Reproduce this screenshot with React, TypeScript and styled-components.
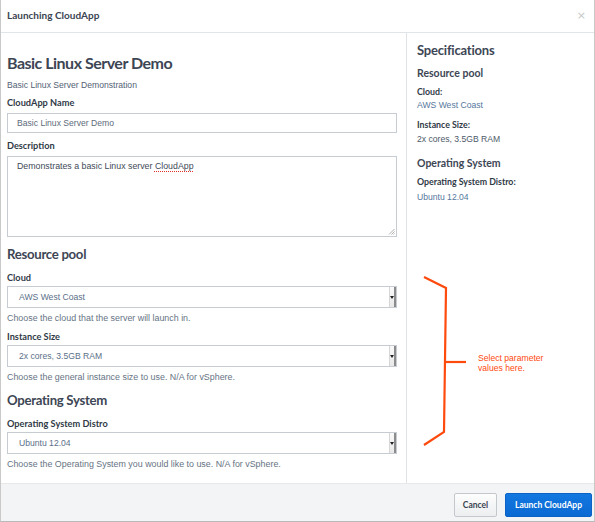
import React from "react";
import styled, { createGlobalStyle } from "styled-components";

const Global = createGlobalStyle`
  html, body { margin: 0; padding: 0; background: #fff; }
  body { font-family: "Liberation Sans", Arial, sans-serif; color: #3b4450; }
  * { box-sizing: border-box; }
`;

const Modal = styled.div`
  position: relative;
  width: 595px;
  height: 522px;
  display: flex;
  flex-direction: column;
  border-left: 1px solid #c9c9c9;
  border-right: 1px solid #c9c9c9;
  border-bottom: 1px solid #b9b9b9;
  background: #fff;
`;

const Header = styled.div`
  height: 33px;
  flex: none;
  display: flex;
  align-items: center;
  justify-content: space-between;
  padding: 0 8px 2px 6px;
  border-bottom: 1px solid #e2e5e8;
`;

const Title = styled.div`
  font-family: Lato, "Liberation Sans", sans-serif;
  font-weight: 700;
  font-size: 10px;
  color: #3a4452;
`;

const Close = styled.span`
  font-size: 11px;
  color: #c8c8c8;
  font-family: "DejaVu Sans", sans-serif;
  line-height: 1;
`;

const Body = styled.div`
  flex: 1;
  display: flex;
  min-height: 0;
`;

const Main = styled.div`
  width: 406px;
  flex: none;
  padding: 20px 9px 0 6px;
  border-right: 1px solid #e0e3e6;
  display: flex;
  flex-direction: column;
`;

const Side = styled.div`
  flex: 1;
  padding: 8px 10px 0 10px;
  display: flex;
  flex-direction: column;
`;

const H1 = styled.h1`
  margin: 0;
  font-family: Lato, "Liberation Sans", sans-serif;
  font-weight: 700;
  font-size: 16px;
  letter-spacing: -0.5px;
  line-height: 20px;
  color: #3d4654;
`;

const Subtitle = styled.div`
  margin-top: 6px;
  font-size: 8.6px;
  line-height: 12px;
  color: #526173;
`;

const SectionTitle = styled.h2`
  margin: 9px 0 0;
  font-family: Lato, "Liberation Sans", sans-serif;
  font-weight: 700;
  font-size: 13.2px;
  letter-spacing: -0.3px;
  line-height: 16px;
  color: #3d4654;
`;

const Field = styled.div<{ $mt: number }>`
  margin-top: ${(p) => p.$mt}px;
  display: flex;
  flex-direction: column;
`;

const Label = styled.div<{ $gap?: number }>`
  font-family: Lato, "Liberation Sans", sans-serif;
  font-weight: 700;
  font-size: 9.2px;
  line-height: 12px;
  color: #2f3a46;
  margin-bottom: ${(p) => p.$gap ?? 4}px;
`;

const TextInput = styled.div`
  height: 20px;
  border: 1px solid #c7ccd2;
  padding: 0 9px;
  display: flex;
  align-items: center;
  font-size: 8.6px;
  color: #5d6b7a;
`;

const TextArea = styled.div`
  position: relative;
  height: 81px;
  border: 1px solid #c7ccd2;
  padding: 3px 9px;
  font-size: 8.8px;
  line-height: 12px;
  color: #3e4a57;
`;

const Squiggle = styled.span`
  text-decoration: underline dotted #e0302a;
  text-underline-offset: 2px;
`;

const Grip = styled.svg`
  position: absolute;
  right: 1px;
  bottom: 1px;
`;

const Select = styled.div`
  height: 22px;
  border: 1px solid #c7ccd2;
  display: flex;
  align-items: stretch;
  font-size: 8.6px;
  color: #5a6f88;
`;

const SelectText = styled.div`
  flex: 1;
  display: flex;
  align-items: center;
  padding-left: 11px;
`;

const Arrow = styled.div`
  width: 7px;
  border-left: 1px solid #d6d6d6;
  background: linear-gradient(#fafafa, #e8e8e8);
  border-right: 2px solid #8c8c8c;
  display: flex;
  align-items: center;
  justify-content: center;
  &::after {
    content: "";
    border-left: 2px solid transparent;
    border-right: 2px solid transparent;
    border-top: 3px solid #222;
  }
`;

const Help = styled.div`
  margin-top: 4px;
  font-size: 8.9px;
  line-height: 12px;
  color: #667384;
`;

const SpecTitle = styled.h2`
  margin: 0;
  font-family: Lato, "Liberation Sans", sans-serif;
  font-weight: 700;
  font-size: 13px;
  letter-spacing: -0.2px;
  line-height: 18px;
  color: #3d4654;
`;

const SpecGroup = styled.h3<{ $mt: number }>`
  margin: ${(p) => p.$mt}px 0 0;
  font-family: Lato, "Liberation Sans", sans-serif;
  font-weight: 700;
  font-size: 10.5px;
  line-height: 14px;
  color: #3d4654;
`;

const SpecKey = styled.div<{ $mt: number }>`
  margin-top: ${(p) => p.$mt}px;
  font-family: Lato, "Liberation Sans", sans-serif;
  font-weight: 700;
  font-size: 8.8px;
  line-height: 12px;
  color: #2f3a46;
`;

const SpecValue = styled.div<{ $mt: number; $blue?: boolean }>`
  margin-top: ${(p) => p.$mt}px;
  font-size: 8.6px;
  line-height: 12px;
  color: ${(p) => (p.$blue ? "#55779c" : "#4d5a69")};
`;

const Footer = styled.div`
  height: 38px;
  flex: none;
  background: #f3f4f6;
  border-top: 1px solid #e6e8ea;
  display: flex;
  justify-content: flex-end;
  align-items: flex-start;
  gap: 8px;
  padding: 9px 2px 0 0;
`;

const Button = styled.button<{ $primary?: boolean }>`
  height: 24px;
  padding: 0;
  border-radius: 2px;
  font-family: Lato, "Liberation Sans", sans-serif;
  font-weight: 700;
  font-size: 8.5px;
  cursor: pointer;
  border: 1px solid ${(p) => (p.$primary ? "#0b63c6" : "#c4c8cc")};
  background: ${(p) =>
    p.$primary ? "linear-gradient(#1378e0, #0b69d2)" : "linear-gradient(#fdfdfd, #eceef0)"};
  color: ${(p) => (p.$primary ? "#ffffff" : "#3a4452")};
  width: ${(p) => (p.$primary ? 87 : 43)}px;
`;

const Annotation = styled.svg`
  position: absolute;
  left: 0;
  top: 0;
  pointer-events: none;
`;

const Note = styled.div`
  position: absolute;
  left: 477px;
  top: 353px;
  font-family: "Liberation Sans", sans-serif;
  font-size: 8.6px;
  line-height: 10px;
  color: #ff4a0e;
`;

export default function App() {
  return (
    <>
      <Global />
      <Modal>
        <Header>
          <Title>Launching CloudApp</Title>
          <Close>×</Close>
        </Header>
        <Body>
          <Main>
            <H1>Basic Linux Server Demo</H1>
            <Subtitle>Basic Linux Server Demonstration</Subtitle>
            <Field $mt={6}>
              <Label>CloudApp Name</Label>
              <TextInput>Basic Linux Server Demo</TextInput>
            </Field>
            <Field $mt={7}>
              <Label>Description</Label>
              <TextArea>
                Demonstrates a basic Linux server <Squiggle>CloudApp</Squiggle>
                <Grip width="7" height="7" viewBox="0 0 7 7">
                  <path d="M1 6.5 L6.5 1 M3.5 6.5 L6.5 3.5 M5.5 6.5 L6.5 5.5" stroke="#999" strokeWidth="0.8" />
                </Grip>
              </TextArea>
            </Field>
            <SectionTitle>Resource pool</SectionTitle>
            <Field $mt={10}>
              <Label $gap={2}>Cloud</Label>
              <Select>
                <SelectText>AWS West Coast</SelectText>
                <Arrow />
              </Select>
              <Help>Choose the cloud that the server will launch in.</Help>
            </Field>
            <Field $mt={7}>
              <Label $gap={2}>Instance Size</Label>
              <Select>
                <SelectText>2x cores, 3.5GB RAM</SelectText>
                <Arrow />
              </Select>
              <Help>Choose the general instance size to use. N/A for vSphere.</Help>
            </Field>
            <SectionTitle>Operating System</SectionTitle>
            <Field $mt={10}>
              <Label $gap={2}>Operating System Distro</Label>
              <Select>
                <SelectText>Ubuntu 12.04</SelectText>
                <Arrow />
              </Select>
              <Help>Choose the Operating System you would like to use. N/A for vSphere.</Help>
            </Field>
          </Main>
          <Side>
            <SpecTitle>Specifications</SpecTitle>
            <SpecGroup $mt={7}>Resource pool</SpecGroup>
            <SpecKey $mt={6}>Cloud:</SpecKey>
            <SpecValue $mt={1} $blue>AWS West Coast</SpecValue>
            <SpecKey $mt={8}>Instance Size:</SpecKey>
            <SpecValue $mt={2}>2x cores, 3.5GB RAM</SpecValue>
            <SpecGroup $mt={11}>Operating System</SpecGroup>
            <SpecKey $mt={6}>Operating System Distro:</SpecKey>
            <SpecValue $mt={3} $blue>Ubuntu 12.04</SpecValue>
          </Side>
        </Body>
        <Footer>
          <Button>Cancel</Button>
          <Button $primary>Launch CloudApp</Button>
        </Footer>
        <Annotation width="595" height="522" viewBox="0 0 595 522">
          <g stroke="#ff4a0e" strokeWidth="2.2" fill="none" strokeLinecap="butt" strokeLinejoin="miter">
            <polyline points="423,277 445,288 443,432 423,445" />
            <line x1="445" y1="362" x2="465" y2="362" />
          </g>
        </Annotation>
        <Note>
          Select parameter
          <br />
          values here.
        </Note>
      </Modal>
    </>
  );
}
